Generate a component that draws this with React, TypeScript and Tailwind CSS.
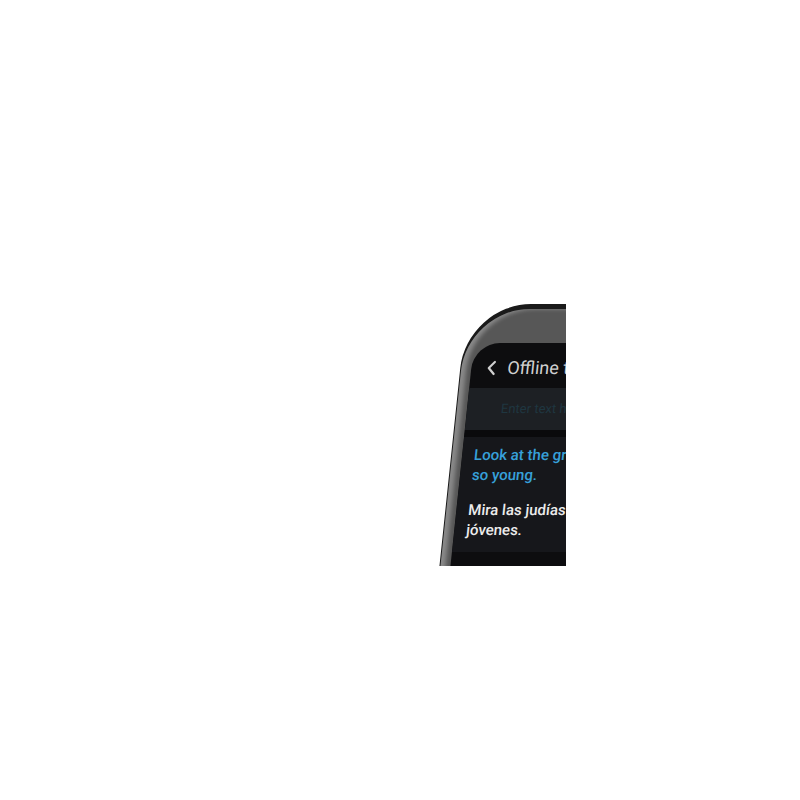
export default function App() {
  return (
    <div className="w-[800px] h-[800px] bg-white pl-[436px] pt-[300px]" style={{ fontFamily: 'Roboto, "Noto Sans", sans-serif' }}>
      {/* visible slice of the phone */}
      <div className="w-[130px] h-[266px] overflow-hidden">
        <div className="ml-[31px] mt-[4px] w-[340px] h-[620px] origin-top-left skew-x-[-6deg] rounded-[64px] bg-[#1a1a1a] pt-[5px] px-[1px]">
          <div className="h-full rounded-[62px] bg-[#575757] shadow-[inset_5px_0_4px_rgba(255,255,255,0.3)] pt-[34px] pl-[10px]">
            <div className="h-full rounded-tl-[26px] bg-[#0d0d0f] overflow-hidden">
              {/* header */}
              <div className="h-[45px] flex items-center gap-[11px] pl-[15px] pt-[5px] text-[#cfcfcf]">
                <svg width="10" height="16" viewBox="0 0 10 16" fill="none">
                  <path d="M8 2L2.5 8L8 14" stroke="#d0d0d0" strokeWidth="2.2" strokeLinecap="round" strokeLinejoin="round" />
                </svg>
                <span className="text-[18px] leading-none">Offline translation</span>
              </div>
              {/* input band */}
              <div className="h-[42px] bg-[#1d2024] flex items-center pl-[34px]">
                <span className="text-[13px] text-[#1f3640]">Enter text here</span>
              </div>
              <div className="h-[7px] bg-[#0a0a0c]" />
              {/* result card */}
              <div className="bg-[#16171b] pl-[12px] pt-[8px] pb-[12px]">
                <p className="text-[15px] leading-[20px] font-medium text-[#37a0d9] w-[172px]">Look at the green beans so young.</p>
                <p className="mt-[15px] text-[15px] leading-[20px] font-medium text-[#ececec] w-[200px]">Mira las judías verdes tan jóvenes.</p>
              </div>
            </div>
          </div>
        </div>
      </div>
    </div>
  );
}
